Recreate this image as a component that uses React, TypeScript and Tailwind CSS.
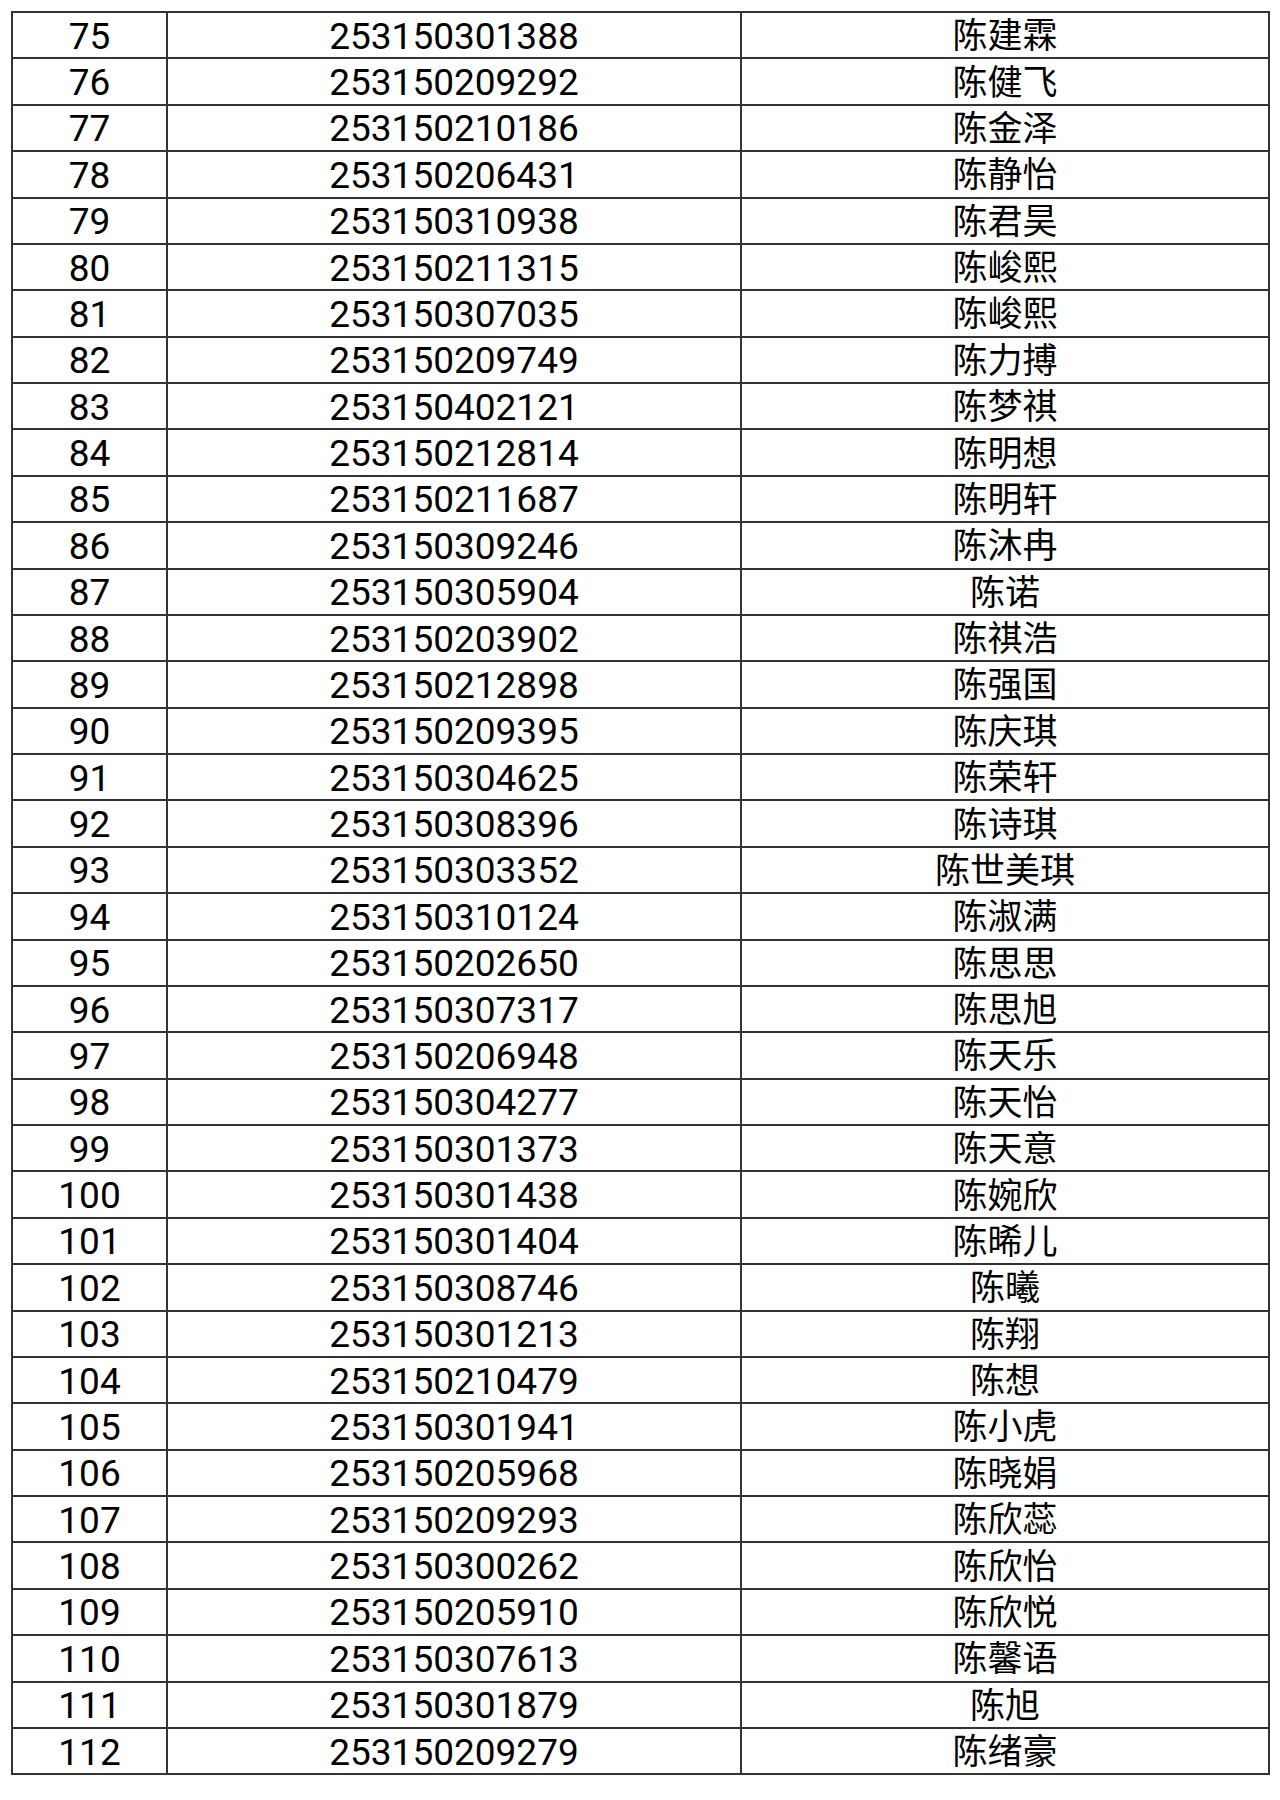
const rows: [number, string, string][] = [
  [75, '253150301388', '陈建霖'],
  [76, '253150209292', '陈健飞'],
  [77, '253150210186', '陈金泽'],
  [78, '253150206431', '陈静怡'],
  [79, '253150310938', '陈君昊'],
  [80, '253150211315', '陈峻熙'],
  [81, '253150307035', '陈峻熙'],
  [82, '253150209749', '陈力搏'],
  [83, '253150402121', '陈梦祺'],
  [84, '253150212814', '陈明想'],
  [85, '253150211687', '陈明轩'],
  [86, '253150309246', '陈沐冉'],
  [87, '253150305904', '陈诺'],
  [88, '253150203902', '陈祺浩'],
  [89, '253150212898', '陈强国'],
  [90, '253150209395', '陈庆琪'],
  [91, '253150304625', '陈荣轩'],
  [92, '253150308396', '陈诗琪'],
  [93, '253150303352', '陈世美琪'],
  [94, '253150310124', '陈淑满'],
  [95, '253150202650', '陈思思'],
  [96, '253150307317', '陈思旭'],
  [97, '253150206948', '陈天乐'],
  [98, '253150304277', '陈天怡'],
  [99, '253150301373', '陈天意'],
  [100, '253150301438', '陈婉欣'],
  [101, '253150301404', '陈晞儿'],
  [102, '253150308746', '陈曦'],
  [103, '253150301213', '陈翔'],
  [104, '253150210479', '陈想'],
  [105, '253150301941', '陈小虎'],
  [106, '253150205968', '陈晓娟'],
  [107, '253150209293', '陈欣蕊'],
  [108, '253150300262', '陈欣怡'],
  [109, '253150205910', '陈欣悦'],
  [110, '253150307613', '陈馨语'],
  [111, '253150301879', '陈旭'],
  [112, '253150209279', '陈绪豪'],
]

export default function App() {
  return (
    <div className="w-[1280px] h-[1800px] bg-white pt-[11px] pl-[11px] text-black font-['Roboto','Noto_Sans_CJK_SC',sans-serif]">
      <div className="w-[1259px] border-t-2 border-x-2 border-[#333]">
        {rows.map(([no, id, name]) => (
          <div key={no} className="grid grid-cols-[155px_574px_1fr] h-[46.38px] border-b-2 border-[#333]">
            <div className="flex items-center justify-center border-r-2 border-[#333] text-[37px] leading-none pt-[2px]">
              {no}
            </div>
            <div className="flex items-center justify-center border-r-2 border-[#333] text-[37px] leading-none pt-[2px]">
              {id}
            </div>
            <div className="flex items-center justify-center text-[35px] leading-none pt-[3px]">
              {name}
            </div>
          </div>
        ))}
      </div>
    </div>
  )
}
